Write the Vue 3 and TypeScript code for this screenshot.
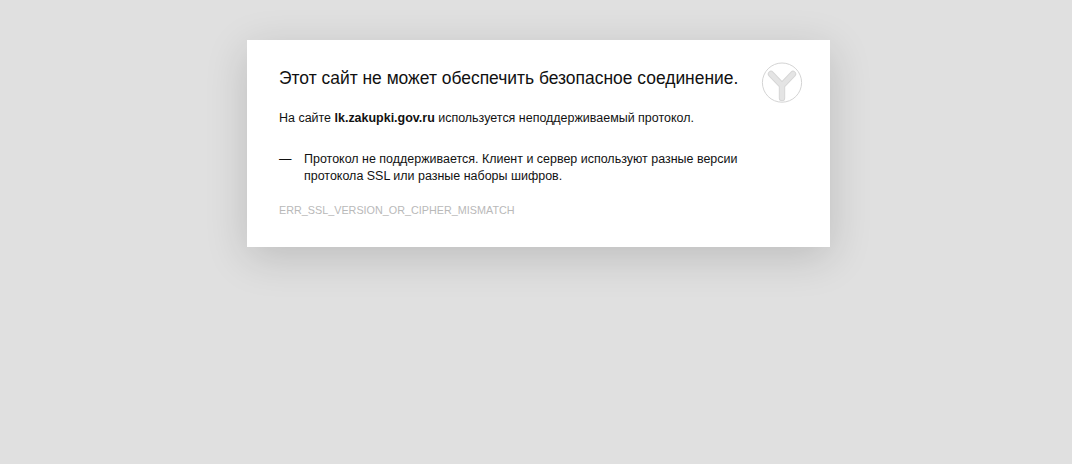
<script setup lang="ts">
const code: string = 'ERR_SSL_VERSION_OR_CIPHER_MISMATCH'
</script>

<template>
  <main class="page">
    <section class="card">
      <svg class="logo" width="42" height="42" viewBox="0 0 42 42" aria-hidden="true">
        <circle cx="21" cy="20.6" r="19.6" fill="#fff" stroke="#d4d4d4" stroke-width="1" />
        <path d="M10 12 L21 23.5 L32 12 M21 23.5 V36" fill="none" stroke="#d6d6d6" stroke-width="6.4" stroke-linecap="round" stroke-linejoin="round" />
        <path d="M10 12 L21 23.5 L32 12 M21 23.5 V36" fill="none" stroke="#e4e4e4" stroke-width="4.6" stroke-linecap="round" stroke-linejoin="round" />
      </svg>
      <h1 class="title">Этот сайт не может обеспечить безопасное соединение.</h1>
      <p class="intro">На сайте <b>lk.zakupki.gov.ru</b> используется неподдерживаемый протокол.</p>
      <div class="reason">
        <span class="dash">—</span>
        <p>Протокол не поддерживается. Клиент и сервер используют разные версии<br />протокола SSL или разные наборы шифров.</p>
      </div>
      <div class="code">{{ code }}</div>
    </section>
  </main>
</template>

<style>
html, body { margin: 0; background: #e0e0e0; }
</style>

<style scoped>
.page {
  height: 464px;
  background: #e0e0e0;
  padding-top: 40px;
  padding-left: 247px;
  box-sizing: border-box;
  overflow: hidden;
  font-family: "Liberation Sans", Arial, sans-serif;
}
.card {
  position: relative;
  width: 583px;
  height: 206.5px;
  box-sizing: border-box;
  padding: 26px 32px 0;
  background: #fff;
  box-shadow: 0 10px 40px rgba(0, 0, 0, 0.16);
  color: #111;
}
.logo { position: absolute; top: 22px; left: 514px; }
.title {
  margin: 0;
  font-size: 17.45px;
  line-height: 24px;
  font-weight: 400;
  white-space: nowrap;
}
.intro {
  margin: 20px 0 0;
  font-size: 12.47px;
  line-height: 16px;
  white-space: nowrap;
}
.reason {
  display: flex;
  margin-top: 25px;
  font-size: 12.47px;
  line-height: 17px;
}
.dash { width: 25px; flex: none; }
.reason p { margin: 0; white-space: nowrap; }
.code {
  margin-top: 17px;
  font-size: 10.8px;
  line-height: 16px;
  color: #b9b9b9;
}
</style>
